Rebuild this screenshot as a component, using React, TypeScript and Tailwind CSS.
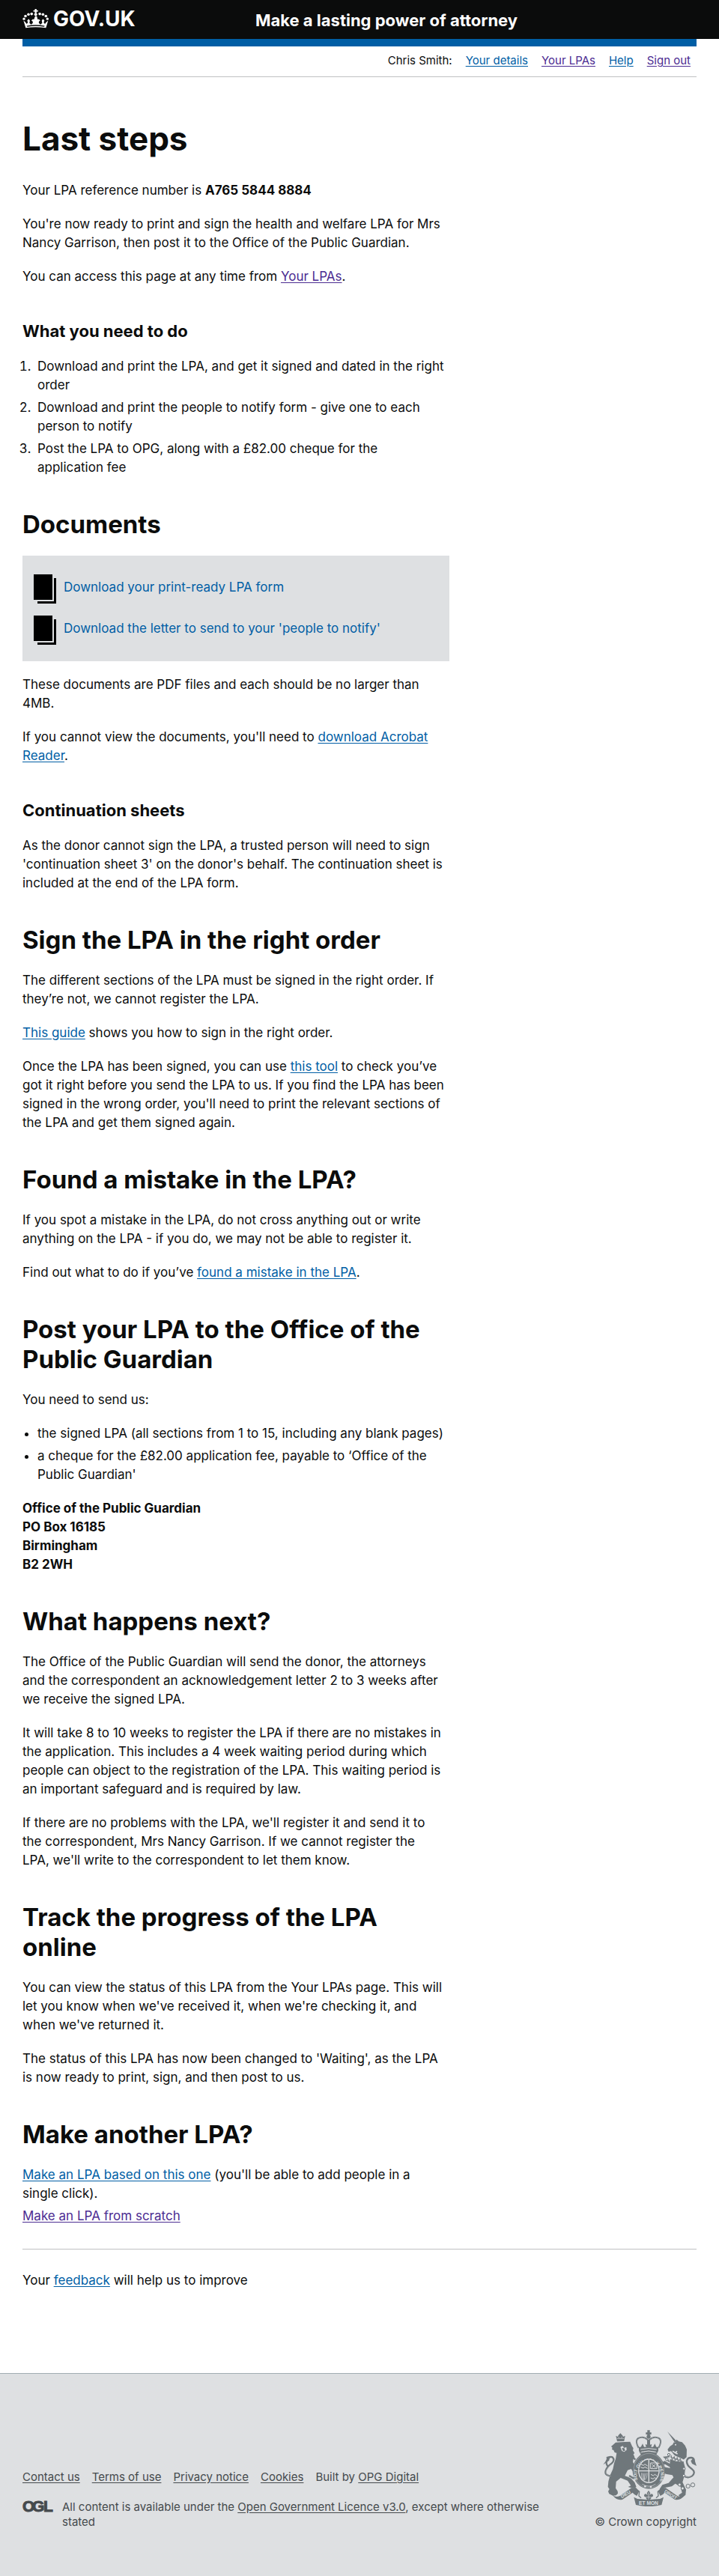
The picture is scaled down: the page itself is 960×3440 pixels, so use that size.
import type { ReactNode } from "react";

type LinkProps = { children: ReactNode; visited?: boolean };

function Link({ children, visited = false }: LinkProps) {
  return (
    <a href="#" className={`underline underline-offset-2 ${visited ? "text-[#4c2c92]" : "text-[#005ea5]"}`}>
      {children}
    </a>
  );
}

function FooterLink({ children }: { children: ReactNode }) {
  return (
    <a href="#" className="underline underline-offset-2">
      {children}
    </a>
  );
}

function Heading({ children }: { children: ReactNode }) {
  return <h2 className="mt-[43px] mb-[22px] text-[33px] leading-[40px] font-bold">{children}</h2>;
}

function SubHeading({ children }: { children: ReactNode }) {
  return <h3 className="mt-[45px] mb-5 text-[22px] leading-[30px] font-bold">{children}</h3>;
}

function Text({ children }: { children: ReactNode }) {
  return <p className="mb-5">{children}</p>;
}

function Crown() {
  return (
    <svg viewBox="30 33 106 79" width="35" height="26" fill="#fff" aria-hidden="true">
      <path d="M80 33h7v5h6v6h-6v6h-7v-6h-6v-6h6z" />
      <circle cx="83.500" cy="55" r="6" />
      <circle cx="67" cy="53" r="5.500" />
      <circle cx="100" cy="53" r="5.500" />
      <circle cx="54" cy="55" r="5.500" />
      <circle cx="113" cy="55" r="5.500" />
      <circle cx="42" cy="62" r="5.500" />
      <circle cx="125" cy="62" r="5.500" />
      <circle cx="36" cy="73" r="5" />
      <circle cx="131" cy="73" r="5" />
      <path d="M34 80l8 7 5 7 5-6-3-8 6-7 5 7-2 10 7 6 7-6-1-7-5-3 5-5h6l3-10 2-3h5l2 3 2 10h6l5 5-5 3-1 7 7 6 7-6-2-10 5-7 6 7-3 8 5 6 5-7 8-7-9 30q-42-6-82 0z" />
      <path d="M47 101q36-7 73 0l-2 4q-34-6-69 0z" fill="#0b0c0c" />
    </svg>
  );
}

function DocumentIcon() {
  return (
    <svg viewBox="0 0 30 39" width="30" height="39" className="shrink-0" aria-hidden="true">
      <path d="M0 0h25v34H0zM27 5h3v34H5v-3h22z" />
    </svg>
  );
}

function Crest() {
  return (
    <svg viewBox="75 75 375 306" width="125" height="102" fill="#6f777b" aria-hidden="true">
      {/* lion */}
      <path d="M127 98l7 4 4-7 7-7 7 7 5 7 7-4-4 22-28 1z" />
      <path d="M131 109h29M137 102l3 5M152 102l-3 5" stroke="#dee0e2" strokeWidth="2" fill="none" />
      <path d="M126 125l34-2 24-1 8 18 5 8-2 9 7 11-5 4 5 12-5 5-2 14 7 12 5 26 4 28-8-6-7-20-8-12-14 5-11 23 13 4 12 6 14 16 7 18-8 5-14-1-11-4 11-5-13-20-28-11-18 15-2 26 8 12 1 9-7 8-13 1-15-7-4-10 5-9-6-9 2-22 7-25 11-24 5-24 6-17 4-24-8-2-4-9-7-3 2-7-5-5 7-6z" />
      <path d="M145 143l10-4 4 8 10-3 1 11-10 8-9-4" fill="#dee0e2" />
      <path d="M151 147l10 1 3 10-8 2z" />
      <path d="M188 194q8-12 17 0M180 258l20 12" stroke="#6f777b" strokeWidth="7" fill="none" />
      <path d="M108 260q-29-2-21-24 6-15 22-26 16-15 4-26-10-5-20 9-9 14 1 27" fill="none" stroke="#6f777b" strokeWidth="7" />
      <path d="M108 260q-27-3-19-24 7-15 21-24" fill="none" stroke="#dee0e2" strokeWidth="1" />
      <path d="M76 214l14-19-1-12 14-4-3 18-9 7z" />

      {/* crown above the shield */}
      <path d="M253 76h10v9h6v8h-6v12h-10V93h-6v-8h6z" />
      <circle cx="258" cy="102" r="8" />
      <path d="M218 147q-18-34 3-41 19-6 34 9v35M298 147q18-34-3-41-19-6-34 9v35" fill="none" stroke="#6f777b" strokeWidth="6" />
      <path d="M217 147q-16-33 4-41 20-6 34 11M299 147q16-33-4-41-20-6-34 11" fill="none" stroke="#dee0e2" strokeWidth="2" strokeDasharray="2 4" />
      <path d="M219 158v-15h8l7-13 6 13h8l-3-11 7 2 6-13 6 13 7-2-3 11h8l7-13 6 13h8v15l-9 18q-30-10-60 0z" />
      <path d="M226 153q32-8 64 0M229 163q29-8 58 0" fill="none" stroke="#dee0e2" strokeWidth="3" />
      <path d="M226 166q32-10 64 0" fill="none" stroke="#dee0e2" strokeWidth="2" strokeDasharray="4 3" />

      {/* unicorn */}
      <path d="M333 81l37 38-7 6z" />
      <path d="M366 124l4-11 9 8 13 3 12 13 7 16-1 31-12 10-34-15-16-19-10 2-4-9 10-13 11-7 3-8z" />
      <circle cx="366" cy="134" r="3" fill="#dee0e2" />
      <path d="M354 160l13 7 4-8M362 165l12 6" stroke="#dee0e2" strokeWidth="5" fill="none" />
      <path d="M346 170l52 23-3 16-45-9-9-6z" fill="#dee0e2" />
      <path d="M344 182l55 22M348 175l4 20 9-14 3 17 9-13 3 16 9-12 4 16" stroke="#6f777b" strokeWidth="3" fill="none" />
      <path d="M344 192l24 8 30 3 7 25-3 28-8 28 14 30-2 21-9 8-13 1-6-8 14-10-6-24-21-12-14 11-31 6-10 9-8-4 11-17 25-8 20-22-5-9-23-4-17-6-7-17 5-9 18 5 16 3-10-14-16-2-5-8 8-5 21 11z" />
      <path d="M316 204l24 15M341 182l-20 2 20 18M391 297l9 30" stroke="#6f777b" strokeWidth="5" fill="none" />
      <path d="M397 258q18 13 35 1 17-14-2-29-21-14-19-31 3-14 18-13 13 2 11 17" fill="none" stroke="#6f777b" strokeWidth="7" />
      <path d="M397 258q17 10 31 1 15-12-2-25" fill="none" stroke="#dee0e2" strokeWidth="1" />
      <path d="M427 199l11-12 6 14 6 18-18-9z" />
      <g fill="#dee0e2" stroke="#6f777b" strokeWidth="3">
        <circle cx="339" cy="174" r="5" />
        <circle cx="331" cy="193" r="5" />
        <circle cx="400" cy="230" r="5" />
        <circle cx="399" cy="258" r="5" />
        <circle cx="382" cy="294" r="6" />
        <circle cx="394" cy="309" r="6" />
        <circle cx="416" cy="300" r="8" />
        <circle cx="435" cy="295" r="8" />
      </g>

      {/* garter and quartered shield */}
      <ellipse cx="259" cy="238" rx="65" ry="73" />
      <ellipse cx="259" cy="238" rx="61" ry="69" fill="none" stroke="#dee0e2" strokeWidth="1" />
      <path id="garter" d="M214 276A48 55 0 1 1 304 276" fill="none" />
      <text fill="#dee0e2" className="font-['Liberation_Sans'] text-[18px] font-bold">
        <textPath href="#garter">SOIT QUI MAL Y PENSE</textPath>
      </text>
      <ellipse cx="259" cy="239" rx="43" ry="49" fill="#dee0e2" />
      <ellipse cx="259" cy="239" rx="39" ry="45" />
      <path d="M259 194v90M220 239h78" stroke="#dee0e2" strokeWidth="4" />
      <path d="M227 212l10 5 6-5 11 7M226 224l11 4 6-5 11 6M266 207h25v23h-25zM271 212l15 14M286 212l-15 14M267 253l10 5 6-5 9 6M266 267l10 4 6-5 7 4" fill="none" stroke="#dee0e2" strokeWidth="3" />
      <path d="M230 247q-2 25 10 29 12-4 12-29M234 248l5 25M240 248v25M246 248l-5 25" fill="none" stroke="#dee0e2" strokeWidth="2" />
      <path d="M232 292q28 17 54 0" stroke="#dee0e2" strokeWidth="2" fill="none" />
      <circle cx="244" cy="301" r="4" fill="#dee0e2" />
      <circle cx="267" cy="303" r="4" fill="#dee0e2" />

      {/* fleur-de-lis */}
      <path d="M258 317l7 11-3 8q10-10 14 0 1 8-10 8l3 4-7 8h-8l-7-8 3-4q-11 0-10-8 4-10 14 0l-3-8z" />
      <path d="M258 325v28M250 344h16" stroke="#dee0e2" strokeWidth="2" />

      {/* motto ribbon */}
      <path d="M113 335q13 12 30 4l47-32h18l12 14-9 18q-11-5-17-13l-40 27q-23 7-41-18z" />
      <path d="M403 335q-13 12-30 4l-47-32h-18l-12 14 9 18q11-5 17-13l40 27q23 7 41-18z" />
      <path d="M202 307l19 15-2 17 9 8M314 307l-19 15 2 17-9 8" fill="none" stroke="#6f777b" strokeWidth="4" />
      <path d="M199 344q14 9 29 8 31 5 61 0 15 1 29-8l-8 31q-51 13-103 0z" />
      <g fill="#dee0e2" className="font-['Liberation_Sans'] text-[20px] font-bold">
        <text x="258" y="376" textAnchor="middle">ET MON</text>
        <text x="169" y="338" textAnchor="middle" transform="rotate(-31 169 338)" className="text-[18px]">DIEU</text>
        <text x="343" y="339" textAnchor="middle" transform="rotate(32 343 339)" className="text-[18px]">DROIT</text>
      </g>
    </svg>
  );
}

function OglLogo() {
  return (
    <svg viewBox="0 0 41 17" width="41" height="17" className="shrink-0 overflow-visible" role="img" aria-label="OGL">
      <text x="0 13 28" y="16" fill="#454a4d" stroke="#454a4d" strokeWidth="1" className="font-['Liberation_Sans'] text-[21px] font-bold">
        OGL
      </text>
    </svg>
  );
}

export default function App() {
  return (
    <div className="bg-white font-[Inter,'Liberation_Sans',sans-serif] text-[17px] leading-[25px] text-[#0b0c0c]">
      <header className="bg-[#0b0c0c] text-white">
        <div className="mx-[30px] flex h-[52px] items-center">
          <a href="#" className="flex w-[311px] items-center gap-[6px] pb-[2px] text-[28px] leading-[32px] font-bold">
            <Crown />
            GOV.UK
          </a>
          <a href="#" className="pt-[2px] text-[22px] leading-[30px] font-bold">
            Make a lasting power of attorney
          </a>
        </div>
      </header>

      <div className="mx-[30px]">
        <div className="h-[10px] bg-[#005ea5]" />
        <nav aria-label="Account" className="flex justify-end gap-[18px] border-b border-[#bfc1c3] pt-[9px] pr-2 pb-[11px] text-[15px] leading-[20px]">
          <span>Chris Smith:</span>
          <Link>Your details</Link>
          <Link visited>Your LPAs</Link>
          <Link>Help</Link>
          <Link visited>Sign out</Link>
        </nav>

        <main className="pt-[57px]">
          <div className="w-2/3 pr-[30px]">
            <h1 className="mb-8 text-[44px] leading-[50px] font-bold">Last steps</h1>
            <Text>
              Your LPA reference number is <strong>A765 5844 8884</strong>
            </Text>
            <Text>
              You're now ready to print and sign the health and welfare LPA for Mrs Nancy Garrison, then post it to the
              Office of the Public Guardian.
            </Text>
            <Text>
              You can access this page at any time from <Link visited>Your LPAs</Link>.
            </Text>

            <SubHeading>What you need to do</SubHeading>
            <ol className="list-decimal space-y-[5px] pl-4">
              <li className="pl-1">Download and print the LPA, and get it signed and dated in the right order</li>
              <li className="pl-1">Download and print the people to notify form - give one to each person to notify</li>
              <li className="pl-1">Post the LPA to OPG, along with a £82.00 cheque for the application&nbsp;fee</li>
            </ol>

            <Heading>Documents</Heading>
            <div className="mb-[19px] flex flex-col gap-4 bg-[#dee0e2] px-[15px] pt-[25px] pb-[22px]">
              <a href="#" className="flex gap-[10px] text-[#005ea5]">
                <span className="text-black"><DocumentIcon /></span>
                <span className="pt-[5px]">Download your print-ready LPA form</span>
              </a>
              <a href="#" className="flex gap-[10px] text-[#005ea5]">
                <span className="text-black"><DocumentIcon /></span>
                <span className="pt-[5px]">Download the letter to send to your 'people to notify'</span>
              </a>
            </div>
            <Text>These documents are PDF files and each should be no larger than 4MB.</Text>
            <Text>
              If you cannot view the documents, you'll need to <Link>download Acrobat Reader</Link>.
            </Text>

            <SubHeading>Continuation sheets</SubHeading>
            <Text>
              As the donor cannot sign the LPA, a trusted person will need to sign 'continuation sheet 3' on the
              donor's behalf. The continuation sheet is included at the end of the LPA form.
            </Text>

            <Heading>Sign the LPA in the right order</Heading>
            <Text>
              The different sections of the LPA must be signed in the right order. If they’re not, we cannot register
              the LPA.
            </Text>
            <Text>
              <Link>This guide</Link> shows you how to sign in the right order.
            </Text>
            <Text>
              Once the LPA has been signed, you can use <Link>this tool</Link> to check you’ve got it right before you
              send the LPA to us. If you find the LPA has been signed in the wrong order, you'll need to print the
              relevant sections of the LPA and get them signed again.
            </Text>

            <Heading>Found a mistake in the LPA?</Heading>
            <Text>
              If you spot a mistake in the LPA, do not cross anything out or write anything on the LPA - if you do, we
              may not be able to register it.
            </Text>
            <Text>
              Find out what to do if you’ve <Link>found a mistake in the LPA</Link>.
            </Text>

            <Heading>Post your LPA to the Office of the Public Guardian</Heading>
            <Text>You need to send us:</Text>
            <ul className="mb-5 list-disc space-y-[5px] pl-5">
              <li>the signed LPA (all sections from 1 to 15, including any blank pages)</li>
              <li>a cheque for the £82.00 application fee, payable to ‘Office of the Public Guardian'</li>
            </ul>
            <address className="font-bold not-italic">
              Office of the Public Guardian
              <br />
              PO Box 16185
              <br />
              Birmingham
              <br />
              B2 2WH
            </address>

            <Heading>What happens next?</Heading>
            <Text>
              The Office of the Public Guardian will send the donor, the attorneys and the correspondent an
              acknowledgement letter 2 to 3 weeks after we receive the signed LPA.
            </Text>
            <Text>
              It will take 8 to 10 weeks to register the LPA if there are no mistakes in the application. This includes
              a 4 week waiting period during which people can object to the registration of the LPA. This waiting
              period is an important safeguard and is required by law.
            </Text>
            <Text>
              If there are no problems with the LPA, we'll register it and send it to the&nbsp;correspondent, Mrs Nancy
              Garrison. If we cannot register the LPA,&nbsp;we'll write to the correspondent to let them know.
            </Text>

            <Heading>Track the progress of the LPA online</Heading>
            <Text>
              You can view the status of this LPA from the Your LPAs page. This will let you know when we've received
              it, when we're checking it, and when we've returned it.
            </Text>
            <Text>
              The status of this LPA has now been changed to 'Waiting', as the LPA is now ready to print, sign, and
              then post to us.
            </Text>

            <Heading>Make another LPA?</Heading>
            <ul className="space-y-[5px]">
              <li>
                <Link>Make an LPA based on this one</Link> (you'll be able to add people in a single click).
              </li>
              <li>
                <Link visited>Make an LPA from scratch</Link>
              </li>
            </ul>
          </div>

          <p className="mt-[31px] mb-[111px] border-t border-[#bfc1c3] pt-[29px]">
            Your <Link>feedback</Link> will help us to improve
          </p>
        </main>
      </div>

      <footer className="border-t border-[#a1acb2] bg-[#dee0e2] px-[30px] pt-[75px] pb-[62px] text-[15px] leading-[20px] text-[#454a4d]">
        <div className="flex items-end justify-between">
          <div className="flex-1 pr-[50px]">
            <ul className="mb-5 flex gap-4">
              <li><FooterLink>Contact us</FooterLink></li>
              <li><FooterLink>Terms of use</FooterLink></li>
              <li><FooterLink>Privacy notice</FooterLink></li>
              <li><FooterLink>Cookies</FooterLink></li>
              <li>Built by <FooterLink>OPG Digital</FooterLink></li>
            </ul>
            <div className="flex items-start gap-3">
              <OglLogo />
              <p>
                All content is available under the <FooterLink>Open Government Licence v3.0</FooterLink>, except where
                otherwise stated
              </p>
            </div>
          </div>
          <a href="#" className="flex flex-col items-end gap-[11px]">
            <Crest />
            <span>© Crown copyright</span>
          </a>
        </div>
      </footer>
    </div>
  );
}
